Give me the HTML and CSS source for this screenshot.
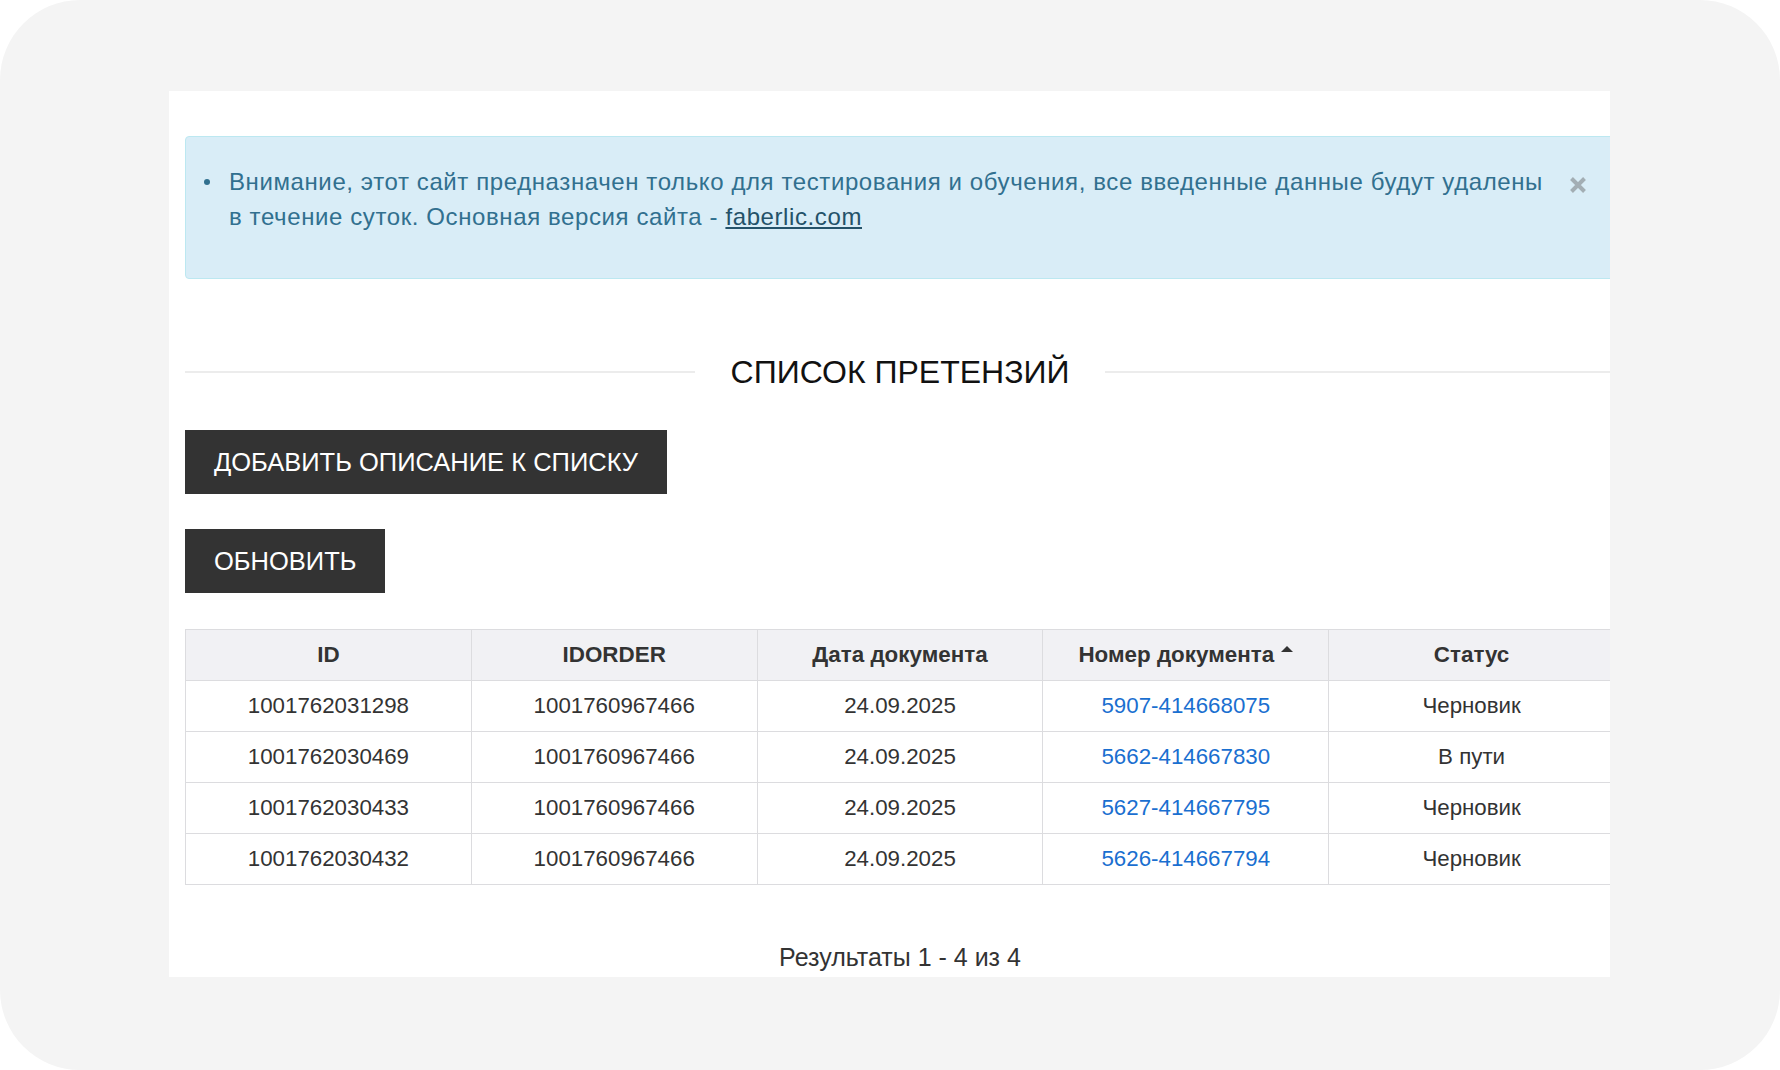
FILE: index.html
```html
<!DOCTYPE html>
<html lang="ru">
<head>
<meta charset="utf-8">
<title>Список претензий</title>
<link rel="stylesheet" href="styles.css">
</head>
<body>
<div class="frame">
  <div class="panel">
    <div class="container">
      <div class="alert">
        <ul class="alert-list">
          <li>Внимание, этот сайт предназначен только для тестирования и обучения, все введенные данные будут удалены в течение суток. Основная версия сайта - <a href="#" class="alert-link">faberlic.com</a></li>
        </ul>
        <button class="close" aria-label="Закрыть">
          <svg width="20" height="20" viewBox="0 0 20 20"><path d="M3.5 3.5 L16.5 16.5 M16.5 3.5 L3.5 16.5" stroke="#a3aeb4" stroke-width="4" stroke-linecap="butt"/></svg>
        </button>
      </div>

      <div class="title-row">
        <span class="title-line"></span>
        <h1 class="title">СПИСОК ПРЕТЕНЗИЙ</h1>
        <span class="title-line"></span>
      </div>

      <div class="actions">
        <button class="btn">ДОБАВИТЬ ОПИСАНИЕ К СПИСКУ</button>
        <button class="btn">ОБНОВИТЬ</button>
      </div>

      <table class="grid">
        <thead>
          <tr>
            <th>ID</th>
            <th>IDORDER</th>
            <th>Дата документа</th>
            <th>Номер документа<span class="caret"></span></th>
            <th>Статус</th>
          </tr>
        </thead>
        <tbody>
          <tr><td>1001762031298</td><td>1001760967466</td><td>24.09.2025</td><td><a href="#">5907-414668075</a></td><td>Черновик</td></tr>
          <tr><td>1001762030469</td><td>1001760967466</td><td>24.09.2025</td><td><a href="#">5662-414667830</a></td><td>В пути</td></tr>
          <tr><td>1001762030433</td><td>1001760967466</td><td>24.09.2025</td><td><a href="#">5627-414667795</a></td><td>Черновик</td></tr>
          <tr><td>1001762030432</td><td>1001760967466</td><td>24.09.2025</td><td><a href="#">5626-414667794</a></td><td>Черновик</td></tr>
        </tbody>
      </table>

      <div class="results">Результаты 1 - 4 из 4</div>
    </div>
  </div>
</div>
</body>
</html>
```

FILE: styles.css
```css
html, body {
  margin: 0;
  padding: 0;
  background: #ffffff;
}

body {
  font-family: "Liberation Sans", Arial, Helvetica, sans-serif;
  color: #333333;
}

.frame {
  width: 1780px;
  height: 1070px;
  box-sizing: border-box;
  background: #f4f4f4;
  border-radius: 80px;
  overflow: hidden;
  padding: 91px 0 0 169px;
}

.panel {
  width: 1441px;
  height: 886px;
  background: #ffffff;
  overflow: hidden;
}

.container {
  width: 1430px;
  margin-left: 16px;
  padding-top: 45px;
}

.alert {
  position: relative;
  box-sizing: border-box;
  height: 143px;
  background: #d9edf7;
  border: 1px solid #bce8f1;
  border-radius: 4px;
  color: #31708f;
  font-size: 24px;
  letter-spacing: 0.6px;
  line-height: 35px;
  padding: 27px 57px 0 0;
}

.alert-list {
  margin: 0;
  padding-left: 43px;
  list-style: none;
}

.alert-list li {
  position: relative;
}

.alert-list li::before {
  content: "";
  position: absolute;
  left: -25px;
  top: 15px;
  width: 6px;
  height: 6px;
  border-radius: 50%;
  background: #31708f;
}

.alert-link {
  color: #245269;
  text-decoration: underline;
}

.close {
  position: absolute;
  right: 26px;
  top: 38px;
  width: 20px;
  height: 20px;
  padding: 0;
  border: 0;
  background: transparent;
  display: flex;
}

.title-row {
  display: flex;
  align-items: center;
  margin-top: 73px;
  height: 40px;
}

.title-line {
  flex: 1;
  height: 2px;
  background: #ececec;
}

.title {
  margin: 0 36px;
  font-size: 32px;
  font-weight: normal;
  line-height: 40px;
  color: #111111;
}

.actions {
  display: flex;
  flex-direction: column;
  align-items: flex-start;
  gap: 35px;
  margin-top: 38px;
}

.btn {
  height: 64px;
  padding: 0 29px;
  border: 0;
  border-radius: 0;
  background: #333333;
  color: #ffffff;
  font-family: "Liberation Sans", Arial, Helvetica, sans-serif;
  font-size: 25.5px;
  line-height: 64px;
}

.grid {
  margin-top: 36px;
  width: 1430px;
  table-layout: fixed;
  border-collapse: collapse;
  font-size: 22.3px;
}

.grid th,
.grid td {
  height: 50px;
  padding: 0 8px;
  border: 1px solid #dcdcdf;
  text-align: center;
  vertical-align: middle;
  color: #333333;
}

.grid th {
  background: #f1f1f4;
  font-weight: bold;
  font-size: 22.4px;
}

.grid td a {
  color: #1a6fd0;
  text-decoration: none;
}

.caret {
  display: inline-block;
  width: 0;
  height: 0;
  margin-left: 7px;
  border-left: 6px solid transparent;
  border-right: 6px solid transparent;
  border-bottom: 6px solid #333333;
  vertical-align: 10px;
}

.results {
  margin-top: 57px;
  text-align: center;
  font-size: 25px;
  line-height: 30px;
  color: #333333;
}
```
